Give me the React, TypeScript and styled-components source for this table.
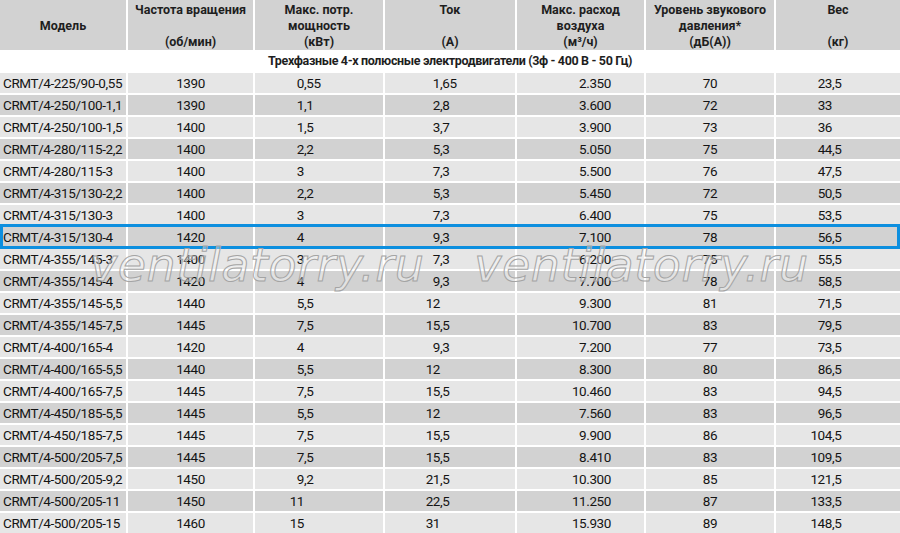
import React from 'react';
import styled, { createGlobalStyle, css } from 'styled-components';

const GlobalStyle = createGlobalStyle`
  html, body {
    margin: 0;
    padding: 0;
    background: #ffffff;
  }

  body {
    font-family: 'Roboto', 'Liberation Sans', sans-serif;
    color: #141414;
  }
`;

const COLUMNS = '126px 125px 128px 130px 127px 128px 1fr';

const Page = styled.div`
  position: relative;
  width: 900px;
  height: 533px;
  overflow: hidden;
`;

const Table = styled.div`
  display: flex;
  flex-direction: column;
  gap: 2px;
`;

const HeaderRow = styled.div`
  display: grid;
  grid-template-columns: ${COLUMNS};
  column-gap: 2px;
  height: 49px;
`;

const HeaderCell = styled.div`
  display: grid;
  grid-template-rows: repeat(3, 16px);
  padding-top: 2px;
  background: #d2d2d2;
  font-size: 12.5px;
  font-weight: bold;
  text-align: center;
  line-height: 16px;
  color: #1e1e1e;
  white-space: nowrap;
`;

const SectionRow = styled.div`
  height: 20px;
  line-height: 20px;
  text-align: center;
  font-size: 12.5px;
  letter-spacing: -0.35px;
  font-weight: bold;
  color: #1e1e1e;
`;

const Row = styled.div<{ $dark: boolean; $active?: boolean }>`
  position: relative;
  display: grid;
  grid-template-columns: ${COLUMNS};
  column-gap: 2px;
  height: 20px;

  & > div {
    background: ${({ $dark }) => ($dark ? '#d2d2d2' : '#e6e6e6')};
  }

  ${({ $active }) =>
    $active &&
    css`
      &::after {
        content: '';
        position: absolute;
        left: 0;
        right: 0;
        top: -3px;
        bottom: -2px;
        border: 3px solid #0d8fdf;
        pointer-events: none;
      }
    `}
`;

const Cell = styled.div<{ $align?: 'left' | 'center' | 'right'; $pad?: number }>`
  font-size: 13.5px;
  letter-spacing: -0.4px;
  line-height: 20px;
  white-space: nowrap;
  text-align: ${({ $align = 'left' }) => $align};
  padding-left: ${({ $align, $pad = 0 }) => ($align === 'right' ? 0 : $pad)}px;
  padding-right: ${({ $align, $pad = 0 }) => ($align === 'right' ? $pad : 0)}px;
`;

const IntPart = styled.span<{ $w: number }>`
  display: inline-block;
  width: ${({ $w }) => $w}px;
  text-align: right;
`;

const Watermark = styled.div`
  position: absolute;
  left: 90px;
  top: 238px;
  display: flex;
  gap: 50px;
  pointer-events: none;
`;

const WatermarkText = styled.span`
  font-family: 'DejaVu Sans', sans-serif;
  font-style: italic;
  font-weight: 200;
  font-size: 46px;
  letter-spacing: 0.5px;
  color: rgba(255, 255, 255, 0.35);
  -webkit-text-stroke: 1px #a4a4a4;
  white-space: nowrap;
`;

const headers: string[][] = [
  ['', 'Модель', ''],
  ['Частота вращения', '', '(об/мин)'],
  ['Макс. потр.', 'мощность', '(кВт)'],
  ['Ток', '', '(А)'],
  ['Макс. расход', 'воздуха', '(м³/ч)'],
  ['Уровень звукового', 'давления*', '(дБ(А))'],
  ['Вес', '', '(кг)'],
];

const rows: string[][] = [
  ['CRMT/4-225/90-0,55', '1390', '0,55', '1,65', '2.350', '70', '23,5'],
  ['CRMT/4-250/100-1,1', '1390', '1,1', '2,8', '3.600', '72', '33'],
  ['CRMT/4-250/100-1,5', '1400', '1,5', '3,7', '3.900', '73', '36'],
  ['CRMT/4-280/115-2,2', '1400', '2,2', '5,3', '5.050', '75', '44,5'],
  ['CRMT/4-280/115-3', '1400', '3', '7,3', '5.500', '76', '47,5'],
  ['CRMT/4-315/130-2,2', '1400', '2,2', '5,3', '5.450', '72', '50,5'],
  ['CRMT/4-315/130-3', '1400', '3', '7,3', '6.400', '75', '53,5'],
  ['CRMT/4-315/130-4', '1420', '4', '9,3', '7.100', '78', '56,5'],
  ['CRMT/4-355/145-3', '1400', '3', '7,3', '6.200', '75', '55,5'],
  ['CRMT/4-355/145-4', '1420', '4', '9,3', '7.700', '78', '58,5'],
  ['CRMT/4-355/145-5,5', '1440', '5,5', '12', '9.300', '81', '71,5'],
  ['CRMT/4-355/145-7,5', '1445', '7,5', '15,5', '10.700', '83', '79,5'],
  ['CRMT/4-400/165-4', '1420', '4', '9,3', '7.200', '77', '73,5'],
  ['CRMT/4-400/165-5,5', '1440', '5,5', '12', '8.300', '80', '86,5'],
  ['CRMT/4-400/165-7,5', '1445', '7,5', '15,5', '10.460', '83', '94,5'],
  ['CRMT/4-450/185-5,5', '1445', '5,5', '12', '7.560', '83', '96,5'],
  ['CRMT/4-450/185-7,5', '1445', '7,5', '15,5', '9.900', '86', '104,5'],
  ['CRMT/4-500/205-7,5', '1445', '7,5', '15,5', '8.410', '83', '109,5'],
  ['CRMT/4-500/205-9,2', '1450', '9,2', '21,5', '10.300', '85', '121,5'],
  ['CRMT/4-500/205-11', '1450', '11', '22,5', '11.250', '87', '133,5'],
  ['CRMT/4-500/205-15', '1460', '15', '31', '15.930', '89', '148,5'],
];

const ACTIVE_ROW = 7;

// decimal-aligned numbers: integer part right-aligned in a fixed box
const Decimal = ({ value, intWidth }: { value: string; intWidth: number }) => {
  const [int, frac] = value.split(',');
  return (
    <Cell>
      <IntPart $w={intWidth}>{int}</IntPart>
      {frac !== undefined ? `,${frac}` : null}
    </Cell>
  );
};

const App = () => (
  <Page>
    <GlobalStyle />
    <Table>
      <HeaderRow>
        {headers.map((lines, i) => (
          <HeaderCell key={i}>
            {lines.map((line, j) => (
              <span key={j}>{line}</span>
            ))}
          </HeaderCell>
        ))}
      </HeaderRow>
      <SectionRow>Трехфазные 4-х полюсные электродвигатели (3ф - 400 В - 50 Гц)</SectionRow>
      {rows.map((r, i) => (
        <Row key={r[0]} $dark={i % 2 === 1} $active={i === ACTIVE_ROW}>
          <Cell $pad={3}>{r[0]}</Cell>
          <Cell $align="center">{r[1]}</Cell>
          <Decimal value={r[2]} intWidth={49} />
          <Decimal value={r[3]} intWidth={55} />
          <Cell $align="right" $pad={33}>{r[4]}</Cell>
          <Cell $align="center">{r[5]}</Cell>
          <Decimal value={r[6]} intWidth={56} />
        </Row>
      ))}
    </Table>
    <Watermark>
      <WatermarkText>ventilatorry.ru</WatermarkText>
      <WatermarkText>ventilatorry.ru</WatermarkText>
    </Watermark>
  </Page>
);

export default App;
